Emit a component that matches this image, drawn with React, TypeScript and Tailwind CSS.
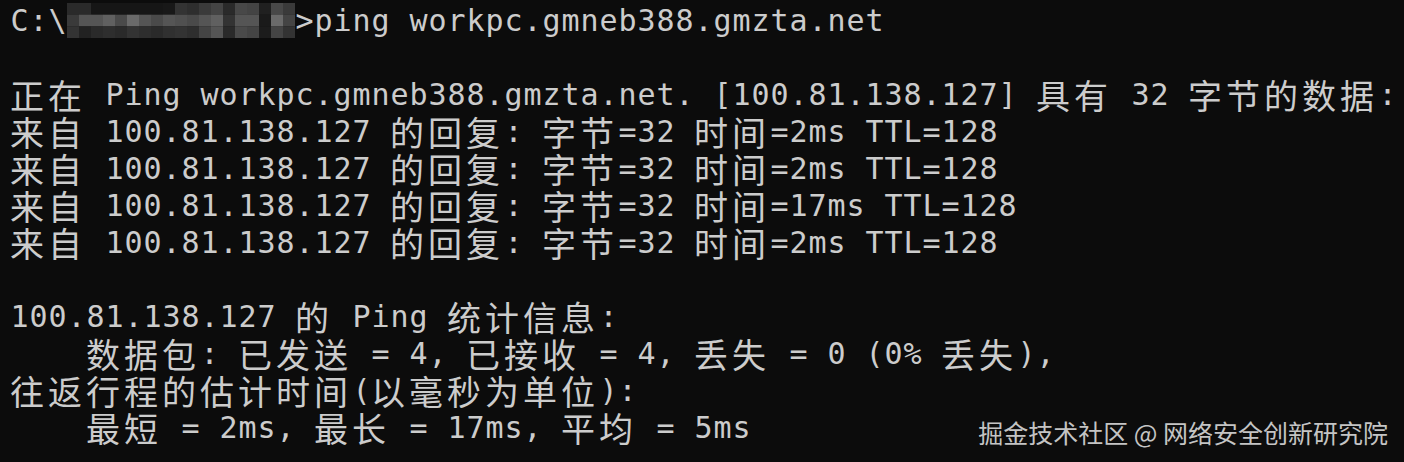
import React from 'react';

// one terminal cell is 19px wide; CJK / full-width chars take two
const isWide = (ch: string) => /[\u2e80-\u9fff\uff00-\uffef]/.test(ch);

function cells(text: string) {
  return [...text].map((ch, i) =>
    isWide(ch) ? (
      <span key={i} className="inline-block w-[38px] shrink-0 text-left text-[34px] font-['Noto_Sans_CJK_SC',sans-serif]">
        {ch}
      </span>
    ) : (
      <span key={i} className="inline-block w-[19px] shrink-0 text-center">
        {ch === ' ' ? '\u00a0' : ch}
      </span>
    )
  );
}

function Line({ text, children }: { text?: string; children?: React.ReactNode }) {
  return (
    <div className="flex h-[37px] items-center whitespace-pre leading-[37px]">
      {children}
      {text !== undefined && cells(text)}
    </div>
  );
}

// pixelated path that was blurred out in the screenshot
const mosaic = [
  ['#2a2a2a', '#2a2a2a', '#161616', '#161616', '#161616', '#161616', '#161616', '#161616', '#181818', '#333333', '#2e2e2e', '#3a3a3a', '#444444', '#2a2a2a', '#484848', '#444444', '#202020', '#484848', '#3a3a3a'],
  ['#3a3a3a', '#555555', '#555555', '#606060', '#4a4a4a', '#6a6a6a', '#555555', '#4a4a4a', '#555555', '#505050', '#4a4a4a', '#555555', '#606060', '#333333', '#555555', '#555555', '#1a1a1a', '#6a6a6a', '#444444'],
  ['#333333', '#222222', '#2a2a2a', '#2e2e2e', '#2a2a2a', '#333333', '#2e2e2e', '#2a2a2a', '#303030', '#333333', '#2e2e2e', '#444444', '#555555', '#2a2a2a', '#4a4a4a', '#444444', '#1c1c1c', '#444444', '#333333'],
];

function Mosaic() {
  return (
    <svg width="228" height="35" viewBox="0 0 228 35" className="shrink-0">
      {mosaic.map((row, r) =>
        row.map((c, k) => <rect key={`${r}-${k}`} x={k * 12} y={r * 11.67} width="12.2" height="11.8" fill={c} />)
      )}
    </svg>
  );
}

const lines = [
  '',
  '正在 Ping workpc.gmneb388.gmzta.net. [100.81.138.127] 具有 32 字节的数据:',
  '来自 100.81.138.127 的回复: 字节=32 时间=2ms TTL=128',
  '来自 100.81.138.127 的回复: 字节=32 时间=2ms TTL=128',
  '来自 100.81.138.127 的回复: 字节=32 时间=17ms TTL=128',
  '来自 100.81.138.127 的回复: 字节=32 时间=2ms TTL=128',
  '',
  '100.81.138.127 的 Ping 统计信息:',
  '    数据包: 已发送 = 4, 已接收 = 4, 丢失 = 0 (0% 丢失),',
  '往返行程的估计时间(以毫秒为单位):',
  '    最短 = 2ms, 最长 = 17ms, 平均 = 5ms',
];

export default function App() {
  return (
    <div className="relative h-[462px] w-[1404px] overflow-hidden bg-[#0c0c0c] text-[#cccccc]">
      <div className="pl-[10px] pt-[2px] text-[30px] font-['DejaVu_Sans_Mono','Noto_Sans_CJK_SC',monospace]">
        <Line>
          {cells('C:\\')}
          <Mosaic />
          {cells('>ping workpc.gmneb388.gmzta.net')}
        </Line>
        {lines.map((l, i) => (
          <Line key={i} text={l} />
        ))}
      </div>

      <div className="absolute right-[16px] top-[416px] text-[25px] leading-[32px] text-[#c4c4c4] font-['Noto_Sans_CJK_SC',sans-serif]">
        掘金技术社区 @ 网络安全创新研究院
      </div>
    </div>
  );
}
